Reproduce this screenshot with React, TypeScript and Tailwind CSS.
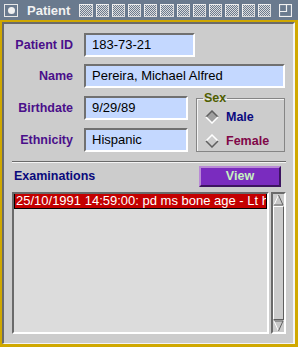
import React from "react"

function Field({ value, w }: { value: string; w: string }) {
    return (
        <div className={`${w} h-[24px] flex items-center px-[6px] bg-[#c4d8ff] border-2 border-t-[#707070] border-l-[#707070] border-b-white border-r-white text-[13px] text-black whitespace-nowrap`}>
            {value}
        </div>
    )
}

function Label({ text }: { text: string }) {
    return <div className="w-[61px] mr-[11px] text-right text-[12.5px] font-bold text-[#4a0f8a]">{text}</div>
}

function Diamond({ on }: { on: boolean }) {
    return (
        <svg width="14" height="14" viewBox="0 0 14 14" className="shrink-0">
            <polygon points="7,1 13,7 7,13 1,7" fill={on ? "#a0a0a0" : "#cccccc"} />
            <polyline points="1,7 7,1 13,7" fill="none" stroke={on ? "#606060" : "#ffffff"} strokeWidth="1.5" />
            <polyline points="1,7 7,13 13,7" fill="none" stroke={on ? "#ffffff" : "#606060"} strokeWidth="1.5" />
        </svg>
    )
}

export default function App() {
    const boxes = Array.from({ length: 12 })
    return (
        <div className="w-[298px] h-[347px] flex flex-col bg-[#d0a800] font-['Liberation_Sans',Arial,sans-serif]">
            {/* title bar */}
            <div className="h-[20px] bg-[#6a7a8e] flex items-center pl-[4px] pr-[6px]">
                <div className="w-[14px] h-[13px] border border-[#e8e8e8] flex items-center justify-center">
                    <div className="w-[7px] h-[7px] rounded-full bg-[#f0f0f0]" />
                </div>
                <span className="ml-[9px] text-[13px] font-bold text-[#f2f2f2] leading-none">Patient</span>
                <div className="ml-[9px] flex-1 flex gap-[3px] h-[13px]">
                    {boxes.map((_, i) => (
                        <div key={i} className="flex-1 border-l border-t border-[#eeeeee] border-r border-b border-r-[#dddddd] border-b-[#dddddd] bg-[repeating-conic-gradient(#dcdcdc_0_25%,#6a7a8e_0_50%)] bg-[length:2px_2px]" />
                    ))}
                </div>
                <svg width="13" height="13" viewBox="0 0 13 13" className="ml-[8px]">
                    <rect x="0.5" y="0.5" width="12" height="12" fill="none" stroke="#f0f0f0" strokeWidth="1.2" />
                    <polyline points="0.5,7.5 7.5,7.5 7.5,0.5" fill="none" stroke="#f0f0f0" strokeWidth="1.2" />
                </svg>
            </div>

            {/* window body */}
            <div className="flex-1 flex flex-col pt-[2px] pl-[2px] pr-[3px] pb-[3px]">
                <div className="flex-1 flex flex-col bg-[#cccccc] border-t-2 border-l-2 border-[#6a6a6a] border-r-2 border-r-[#f4f4f4] border-b border-b-[#f4f4f4] pl-[8px] pr-[7px] pt-[9px]">
                    <div className="flex items-center">
                        <Label text="Patient ID" />
                        <Field value="183-73-21" w="w-[111px]" />
                    </div>
                    <div className="flex items-center mt-[7px]">
                        <Label text="Name" />
                        <Field value="Pereira, Michael Alfred" w="w-[201px]" />
                    </div>
                    <div className="flex mt-[8px]">
                        <div className="flex flex-col gap-[8px]">
                            <div className="flex items-center">
                                <Label text="Birthdate" />
                                <Field value="9/29/89" w="w-[104px]" />
                            </div>
                            <div className="flex items-center">
                                <Label text="Ethnicity" />
                                <Field value="Hispanic" w="w-[104px]" />
                            </div>
                        </div>
                        <fieldset className="ml-[8px] mt-[-5px] w-[89px] h-[61px] border border-[#858585] shadow-[inset_1px_1px_0_#f4f4f4] px-[8px]">
                            <legend className="px-[1px] ml-[-2px] text-[12.5px] font-bold text-[#4f5e00] leading-[14px]">Sex</legend>
                            <div className="flex items-center gap-[7px] mt-[3px]">
                                <Diamond on={true} />
                                <span className="text-[12.5px] font-bold text-[#0a0a80]">Male</span>
                            </div>
                            <div className="flex items-center gap-[7px] mt-[5px]">
                                <Diamond on={false} />
                                <span className="text-[12.5px] font-bold text-[#800848]">Female</span>
                            </div>
                        </fieldset>
                    </div>

                    <div className="mt-[9px] h-[2px] border-t border-[#6a6a6a] border-b border-b-[#f4f4f4]" />

                    <div className="mt-[3px] flex items-center justify-between pl-[2px] pr-[5px]">
                        <span className="text-[12.5px] font-bold text-[#0a0a7c]">Examinations</span>
                        <button className="w-[82px] h-[21px] bg-[#7a2cbf] border-2 border-t-[#b98ad6] border-l-[#b98ad6] border-b-[#3c1460] border-r-[#3c1460] text-[12.5px] font-bold text-[#c6f2c0] leading-none">
                            View
                        </button>
                    </div>

                    <div className="mt-[5px] h-[142px] flex gap-[2px]">
                        <div className="w-[257px] bg-[#dcdcdc] border-2 border-t-[#6a6a6a] border-l-[#6a6a6a] border-b-white border-r-white overflow-hidden">
                            <div className="h-[16px] -mt-px bg-[#c40000] border border-black text-white text-[13px] leading-[14px] whitespace-nowrap overflow-hidden pl-[1px]">
                                25/10/1991 14:59:00: pd ms bone age - Lt h
                            </div>
                        </div>
                        <div className="w-[15px] flex flex-col border-2 border-t-[#6a6a6a] border-l-[#6a6a6a] border-b-white border-r-white bg-[#cccccc]">
                            <svg width="11" height="12" viewBox="0 0 11 12" className="shrink-0">
                                <polygon points="5.5,1 10,11 1,11" fill="#c8c8c8" />
                                <polyline points="1,11 5.5,1" stroke="#ffffff" fill="none" />
                                <polyline points="5.5,1 10,11 1,11" stroke="#606060" fill="none" />
                            </svg>
                            <div className="flex-1 border-l border-t border-white border-r border-b border-r-[#606060] border-b-[#606060] bg-[#cccccc]" />
                            <svg width="11" height="12" viewBox="0 0 11 12" className="shrink-0">
                                <polygon points="1,1 10,1 5.5,11" fill="#c8c8c8" />
                                <polyline points="1,1 10,1" stroke="#606060" fill="none" />
                                <polyline points="1,1 5.5,11" stroke="#ffffff" fill="none" />
                                <polyline points="10,1 5.5,11" stroke="#606060" fill="none" />
                            </svg>
                        </div>
                    </div>
                </div>
            </div>
        </div>
    )
}
